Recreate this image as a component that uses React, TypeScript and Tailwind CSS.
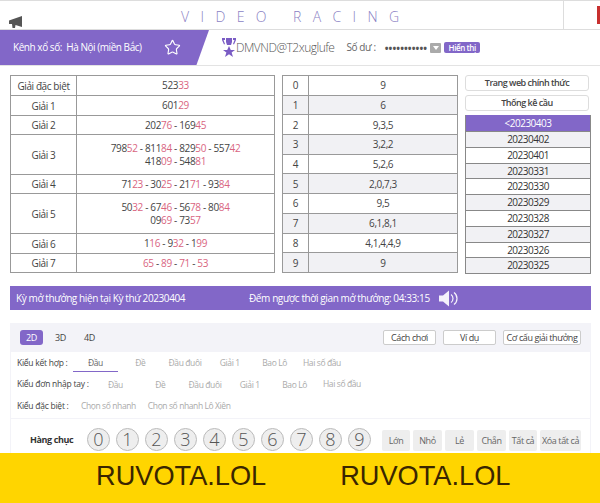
import { Star } from "lucide-react";

const prizes = [
  { name: "Giải đặc biệt", lines: [["52333"]], h: "h-[20px]" },
  { name: "Giải 1", lines: [["60129"]], h: "h-[20px]" },
  { name: "Giải 2", lines: [["20276", "16945"]], h: "h-[19px]" },
  { name: "Giải 3", lines: [["79852", "81184", "82950", "55742"], ["41809", "54881"]], h: "h-[40px]" },
  { name: "Giải 4", lines: [["7123", "3025", "2171", "9384"]], h: "h-[19px]" },
  { name: "Giải 5", lines: [["5032", "6746", "5678", "8084"], ["0969", "7357"]], h: "h-[40px]" },
  { name: "Giải 6", lines: [["116", "932", "199"]], h: "h-[20px]" },
  { name: "Giải 7", lines: [["65", "89", "71", "53"]], h: "h-[19px]" },
];

const tails = ["9", "6", "9,3,5", "3,2,2", "5,2,6", "2,0,7,3", "9,5", "6,1,8,1", "4,1,4,4,9", "9"];

const dates = ["20230402", "20230401", "20230331", "20230330", "20230329", "20230328", "20230327", "20230326", "20230325"];

const gameTypes = ["Đầu", "Đề", "Đầu đuôi", "Giải 1", "Bao Lô"];

const quickButtons = [
  ["Lớn", "w-[28px]"],
  ["Nhỏ", "w-[29px]"],
  ["Lẻ", "w-[29px]"],
  ["Chẵn", "w-[29px]"],
  ["Tất cả", "w-[28px]"],
  ["Xóa tất cả", "w-[41px]"],
];

function Num({ value }: { value: string }) {
  const cut = Math.max(0, value.length - 2);
  return (
    <span>
      {value.slice(0, cut)}
      <span className="text-[#d9657f]">{value.slice(cut)}</span>
    </span>
  );
}

function PrizeLine({ nums }: { nums: string[] }) {
  return (
    <div className="leading-[13px] tracking-[-0.35px]">
      {nums.map((n, i) => (
        <span key={n}>
          {i > 0 && " - "}
          <Num value={n} />
        </span>
      ))}
    </div>
  );
}

function TypeRow({ label, labelWidth, underline }: { label: string; labelWidth: string; underline?: boolean }) {
  return (
    <div className="h-[21.500px] flex items-center">
      <span className={`${labelWidth} text-[#444] font-medium whitespace-nowrap tracking-[-0.25px]`}>{label}</span>
      {gameTypes.map((it, i) => (
        <span
          key={it}
          className={`w-[44.800px] text-center whitespace-nowrap h-[19px] leading-[19px] ${underline && i === 0 ? "text-[#666] border-b border-[#8267c8]" : "text-[#aaa]"}`}
        >
          {it}
        </span>
      ))}
      <span className="ml-[6px] text-[#aaa] whitespace-nowrap">Hai số đầu</span>
    </div>
  );
}

export default function App() {
  return (
    <div className="h-[503px] w-[600px] overflow-hidden bg-white flex flex-col text-[10px] tracking-[-0.4px] text-[#444] font-['Open_Sans','Noto_Sans',sans-serif]">
      {/* top bar */}
      <div className="h-[30px] shrink-0 flex items-stretch border-t border-b border-[#ddd]">
        <div className="w-[563px] flex">
          <svg viewBox="0 0 14 12" className="w-[14px] h-[12px] ml-[9px] mt-[15px] fill-[#555]">
            <path d="M0 4.500 13 0v11L6.500 9l-.5 3H3.500L3 8H0z" />
          </svg>
          <div className="ml-[158px] text-[14px] leading-[31px] text-[#8a7fc4] tracking-[11.400px] font-light whitespace-nowrap">VIDEO RACING</div>
        </div>
        <div className="flex-1 border-l border-[#ddd] flex justify-end items-center">
          <div className="w-[3px] h-[18px] bg-[#c8302f]" />
        </div>
      </div>

      {/* channel row */}
      <div className="h-[36px] shrink-0 flex items-center border-b border-[#e3e3e3]">
        <div className="w-[209px] h-full bg-[#8267c8] [clip-path:polygon(0_0,100%_0,94%_100%,0_100%)] flex items-center text-white pl-[13px]">
          <span className="w-[151px] whitespace-nowrap tracking-[-0.45px]">Kênh xổ số:&nbsp; Hà Nội (miền Bắc)</span>
          <Star className="w-[17px] h-[17px]" strokeWidth={1.6} />
        </div>
        <svg viewBox="0 0 14 19" className="w-[14px] h-[19px] ml-[13px] fill-[#7a5cc4]">
          <path d="M0 0h3v2H0zM4 0h6v4l-1 3H5L4 4zM11 0h3v2h-3zM0 2h1.500l1.500 4-1 .5zM14 2h-1.500L11 6l1 .5zM7 8l1.800 4H13l-3.400 2.500L11 19l-4-2.800L3 19l1.400-4.500L1 12h4.200z" />
        </svg>
        <span className="text-[12px] tracking-[-0.5px] leading-none text-[#555] font-light whitespace-nowrap">DMVND@T2xuglufe</span>
        <span className="ml-[12px] text-[#666] whitespace-nowrap">Số dư :</span>
        <span className="ml-[9px] font-bold tracking-[0.1px] text-[#555] leading-none whitespace-nowrap">•••••••••••</span>
        <span className="ml-[3px] w-[11px] h-[10px] bg-[#aaa] rounded-[1px] flex items-center justify-center">
          <span className="border-x-[3px] border-x-transparent border-t-[4px] border-t-white" />
        </span>
        <span className="ml-[3px] h-[11px] w-[36px] rounded-[2px] bg-[#8267c8] text-white text-[8px] leading-[11px] text-center font-semibold whitespace-nowrap">Hiển thị</span>
      </div>

      {/* results */}
      <div className="mt-[9px] flex items-start pl-[10px]">
        <table className="w-[265px] border-collapse table-fixed">
          <tbody>
            {prizes.map((p) => (
              <tr key={p.name} className={p.h}>
                <td className="w-[66px] p-0 border border-[#999] text-center leading-none">{p.name}</td>
                <td className="p-0 border border-[#999] text-center">
                  {p.lines.map((l) => (
                    <PrizeLine key={l[0]} nums={l} />
                  ))}
                </td>
              </tr>
            ))}
          </tbody>
        </table>

        <table className="ml-[7px] w-[176px] border-collapse table-fixed">
          <tbody>
            {tails.map((t, i) => (
              <tr key={i} className={`h-[19.700px] ${i % 2 === 1 ? "bg-[#f1f1f4]" : "bg-white"}`}>
                <td className="w-[26px] p-0 border border-[#999] text-center leading-none">{i}</td>
                <td className="p-0 border border-[#999] text-center leading-none">{t}</td>
              </tr>
            ))}
          </tbody>
        </table>

        <div className="ml-[7px] w-[126px] flex flex-col">
          <div className="w-[124px] h-[16px] border border-[#ddd] rounded-[3px] text-center text-[9px] tracking-[-0.5px] leading-[14px] font-semibold whitespace-nowrap">Trang web chính thức</div>
          <div className="w-[124px] mt-[4px] h-[16px] border border-[#ddd] rounded-[3px] text-center text-[9px] tracking-[-0.5px] leading-[14px] font-semibold whitespace-nowrap">Thống kê cầu</div>
          <div className="mt-[4px] flex flex-col border-x border-b border-[#888] tracking-[-0.5px]">
            <div className="h-[16px] bg-[#8267c8] text-white text-center leading-[16px]">&lt;20230403</div>
            {dates.map((d, i) => (
              <div key={d} className={`h-[15.800px] border-t border-[#888] text-center leading-[15px] text-[#333] ${i % 2 === 0 ? "bg-[#f1f1f4]" : "bg-white"}`}>
                {d}
              </div>
            ))}
          </div>
        </div>
      </div>

      {/* draw bar */}
      <div className="mt-[12px] ml-[10px] w-[581px] h-[24px] shrink-0 bg-[#8267c8] text-white flex items-center whitespace-nowrap">
        <span className="ml-[6px] w-[233px]">Kỳ mở thưởng hiện tại Kỳ thứ 20230404</span>
        <span>Đếm ngược thời gian mở thưởng: 04:33:15</span>
        <svg viewBox="0 0 20 16" className="ml-[9px] w-[20px] h-[17px]">
          <path d="M0 5h4l6-5v16l-6-5H0z" fill="#f4f1fb" />
          <path d="M12 4c1.500 1 2 2.500 2 4s-.5 3-2 4M15 2c2 1.500 3 3.500 3 6s-1 4.500-3 6" fill="none" stroke="#f4f1fb" strokeWidth="1.200" />
        </svg>
      </div>

      {/* betting panel */}
      <div className="mt-[13px] ml-[10px] w-[581px] flex-1 min-h-0 bg-[#f3f3f8] px-px flex flex-col">
        <div className="h-[29px] shrink-0 flex items-center pl-[9px] text-[9px]">
          <span className="w-[23px] h-[15px] rounded-[3px] bg-[#8267c8] text-white leading-[15px] text-center">2D</span>
          <span className="ml-[6px] w-[23px] text-center">3D</span>
          <span className="ml-[6px] w-[23px] text-center">4D</span>
          <div className="ml-auto flex gap-[7px] mr-[9px] whitespace-nowrap">
            <span className="w-[53px] h-[15px] bg-white border border-[#ccc] rounded-[2px] text-center leading-[13px]">Cách chơi</span>
            <span className="w-[53px] h-[15px] bg-white border border-[#ccc] rounded-[2px] text-center leading-[13px]">Ví dụ</span>
            <span className="w-[78px] h-[15px] bg-white border border-[#ccc] rounded-[2px] text-center leading-[13px]">Cơ cấu giải thưởng</span>
          </div>
        </div>

        <div className="h-[66px] shrink-0 bg-white pl-[6px] flex flex-col text-[8.500px]">
          <TypeRow label="Kiểu kết hợp :" labelWidth="w-[56px]" underline />
          <TypeRow label="Kiểu đơn nhập tay :" labelWidth="w-[76px]" />
          <div className="h-[21.500px] flex items-center">
            <span className="w-[64px] text-[#444] font-medium whitespace-nowrap tracking-[-0.25px]">Kiểu đặc biệt :</span>
            <span className="text-[#aaa]">Chọn số nhanh</span>
            <span className="ml-[12px] text-[#aaa]">Chọn số nhanh Lô Xiên</span>
          </div>
        </div>

        <div className="flex-1 min-h-0 mt-px bg-white flex items-center pl-[19px] pt-[7px]">
          <span className="w-[57px] text-[9px] font-bold text-[#333] whitespace-nowrap">Hàng chục</span>
          <div className="flex gap-[6px]">
            {[0, 1, 2, 3, 4, 5, 6, 7, 8, 9].map((n) => (
              <span key={n} className="w-[23px] h-[23px] rounded-full bg-[#eee] border border-[#bbb] text-center text-[18px] tracking-normal font-light leading-[21px] text-[#555]">
                {n}
              </span>
            ))}
          </div>
          <div className="flex ml-[11px] gap-[3px] text-[9px] text-[#666] pt-[2px]">
            {quickButtons.map(([t, w]) => (
              <span key={t} className={`${w} h-[21px] bg-[#eee] rounded-[2px] text-center leading-[21px] whitespace-nowrap`}>
                {t}
              </span>
            ))}
          </div>
        </div>
      </div>

      {/* banner */}
      <div className="h-[50px] shrink-0 bg-[#ffd500] flex items-center pb-[3px] font-['Liberation_Sans',sans-serif] tracking-normal text-[27.200px] text-[#3a2600]">
        <span className="ml-[96px]">RUVOTA.LOL</span>
        <span className="ml-[74px]">RUVOTA.LOL</span>
      </div>
    </div>
  );
}
